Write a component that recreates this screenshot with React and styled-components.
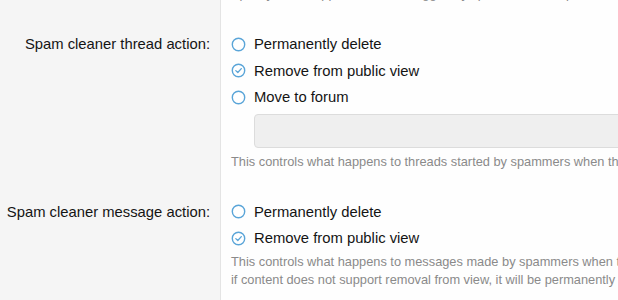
import React from "react";
import styled, { createGlobalStyle } from "styled-components";

const GlobalStyle = createGlobalStyle`
  html, body {
    margin: 0;
    padding: 0;
    background: #f5f5f5;
    overflow: hidden;
  }
  body {
    font-family: "Liberation Sans", Arial, sans-serif;
    color: #141414;
  }
`;

const Form = styled.div`
  display: grid;
  grid-template-columns: 221px 1fr;
  width: 618px;
`;

const Row = styled.div`
  display: contents;
`;

const Label = styled.div`
  background: #f5f5f5;
  border-right: 1px solid #e4e4e4;
  text-align: right;
  padding: ${(p) => p.top}px 10px 0 0;
  font-size: 14.8px;
  line-height: 26px;
  white-space: nowrap;
`;

const Field = styled.div`
  background: #fefefe;
  padding: ${(p) => p.top}px 0 ${(p) => p.bottom || 0}px 10px;
  min-width: 0;
  overflow: hidden;
`;

const Option = styled.label`
  display: flex;
  align-items: center;
  height: 26.5px;
  font-size: 14.8px;
  white-space: nowrap;
`;

const Radio = styled.svg`
  width: 15px;
  height: 15px;
  flex: 0 0 15px;
  margin-right: 8px;
`;

const ForumSelect = styled.div`
  margin: 3px 0 0 23px;
  width: 420px;
  height: 34px;
  box-sizing: border-box;
  background: #efefef;
  border: 1px solid #dcdcdc;
  border-radius: 4px;
`;

const Hint = styled.div`
  font-size: 12.8px;
  line-height: 18px;
  color: #8a8a8a;
  white-space: nowrap;
  margin-top: ${(p) => p.gap || 0}px;
`;

const PrevHint = styled(Hint)`
  margin-top: -15px;
  height: 18px;
`;

const RadioIcon = ({ checked }) => (
  <Radio viewBox="0 0 15 15">
    <circle cx="7.5" cy="7.5" r="6.2" fill="#fff" stroke="#5aa5d8" strokeWidth="1.4" />
    {checked && (
      <path d="M4.8 7.6 L6.8 9.5 L10.3 5.6" fill="none" stroke="#5aa5d8" strokeWidth="1.3" strokeLinecap="round" strokeLinejoin="round" />
    )}
  </Radio>
);

const RadioOption = ({ checked, children }) => (
  <Option>
    <RadioIcon checked={checked} />
    {children}
  </Option>
);

export default function App() {
  return (
    <>
      <GlobalStyle />
      <Form>
        <Row>
          <Label top={0} />
          <Field top={0}>
            <PrevHint>Specify what happens to users flagged by spammer cleanup when they are processed by spam cleaner.</PrevHint>
          </Field>
        </Row>
        <Row>
          <Label top={28}>Spam cleaner thread action:</Label>
          <Field top={28}>
            <RadioOption>Permanently delete</RadioOption>
            <RadioOption checked>Remove from public view</RadioOption>
            <RadioOption>Move to forum</RadioOption>
            <ForumSelect />
            <Hint gap={5}>This controls what happens to threads started by spammers when they are cleaned up.</Hint>
          </Field>
        </Row>
        <Row>
          <Label top={28}>Spam cleaner message action:</Label>
          <Field top={28} bottom={12}>
            <RadioOption>Permanently delete</RadioOption>
            <RadioOption checked>Remove from public view</RadioOption>
            <Hint gap={1}>
              This controls what happens to messages made by spammers when they are cleaned up. Note that
              <br />
              if content does not support removal from view, it will be permanently deleted.
            </Hint>
          </Field>
        </Row>
      </Form>
    </>
  );
}
